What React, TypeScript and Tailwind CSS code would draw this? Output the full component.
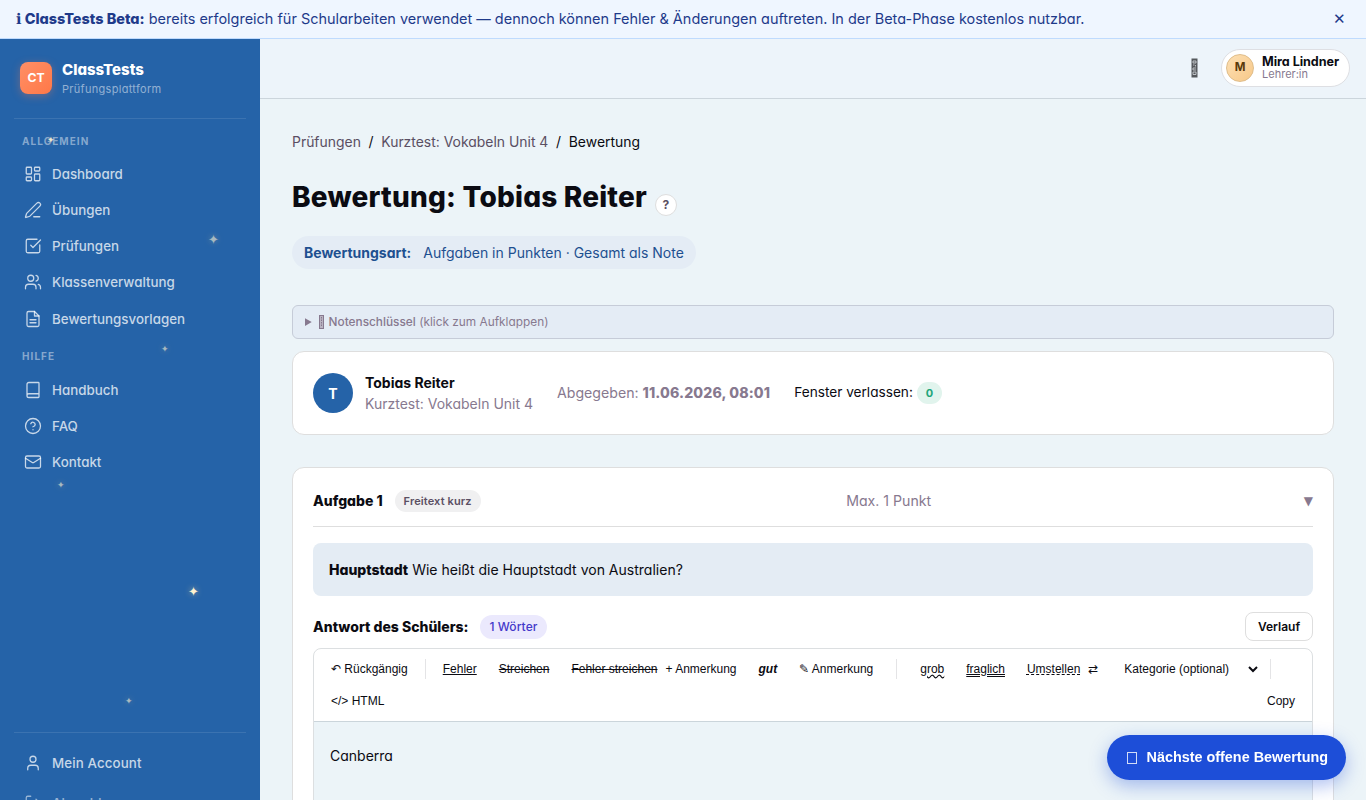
import {
  LayoutDashboard,
  PenLine,
  SquareCheckBig,
  Users,
  Book,
  CircleHelp,
  Mail,
  User,
  LogOut,
} from "lucide-react";
import type { ComponentType, ReactNode } from "react";

type IconProps = { size?: number; strokeWidth?: number; className?: string };
type IconType = ComponentType<IconProps>;

function FileLines({ size = 24, strokeWidth = 2, className }: IconProps) {
  return (
    <svg
      width={size}
      height={size}
      viewBox="0 0 24 24"
      fill="none"
      stroke="currentColor"
      strokeWidth={strokeWidth}
      strokeLinecap="round"
      strokeLinejoin="round"
      className={className}
    >
      <path d="M14 2H6a2 2 0 0 0-2 2v16a2 2 0 0 0 2 2h12a2 2 0 0 0 2-2V8z" />
      <path d="M14 2v6h6M16 13H8M16 17H8" />
    </svg>
  );
}

function NavItem({ icon: Icon, label }: { icon: IconType; label: string }) {
  return (
    <a className="flex h-[36.15px] items-center gap-2.5 px-2.5 text-[13.35px] font-medium text-white/75">
      <Icon size={18} strokeWidth={1.7} className="shrink-0" />
      <span>{label}</span>
    </a>
  );
}

function SectionLabel({ children }: { children: ReactNode }) {
  return (
    <div className="px-2 text-[10px] leading-4 font-bold tracking-[1.05px] text-white/45">{children}</div>
  );
}

const stars = [
  "left-[47px] top-[93px] text-[9px] opacity-90",
  "left-[208px] top-[192px] text-[13px] opacity-60",
  "left-[161px] top-[302px] text-[9px] opacity-60",
  "left-[57px] top-[438px] text-[9px] opacity-60",
  "left-[188px] top-[544px] text-[13px] opacity-100",
  "left-[125px] top-[654px] text-[9px] opacity-60",
];

function Sidebar() {
  return (
    <aside className="relative flex w-[260px] shrink-0 flex-col bg-[#2563a8] px-3.5">
      {stars.map((s) => (
        <span
          key={s}
          className={
            "absolute leading-4 text-[#fff3d0] [text-shadow:0_0_6px_rgba(255,220,150,0.6)] " + s
          }
        >
          ✦
        </span>
      ))}
      <div className="flex h-20 items-center gap-2.5 border-b border-white/10 px-1.5 pb-0.5">
        <div className="flex size-8 items-center justify-center rounded-lg bg-linear-to-br from-[#ff8f66] to-[#ff7847] pt-px text-[12.2px] font-bold text-white shadow-[0_2px_8px_rgba(255,122,77,0.35)]">
          CT
        </div>
        <div className="pt-1">
          <div className="text-[15px] leading-[18px] font-[790] text-white">ClassTests</div>
          <div className="mt-0.5 text-[11px] leading-[17px] tracking-[0.3px] text-white/50">Prüfungsplattform</div>
        </div>
      </div>
      <nav className="flex flex-col">
        <div className="pt-[14px] pb-[7px]">
          <SectionLabel>ALLGEMEIN</SectionLabel>
        </div>
        <NavItem icon={LayoutDashboard} label="Dashboard" />
        <NavItem icon={PenLine} label="Übungen" />
        <NavItem icon={SquareCheckBig} label="Prüfungen" />
        <NavItem icon={Users} label="Klassenverwaltung" />
        <NavItem icon={FileLines} label="Bewertungsvorlagen" />
        <div className="pt-[11.75px] pb-[7px]">
          <SectionLabel>HILFE</SectionLabel>
        </div>
        <NavItem icon={Book} label="Handbuch" />
        <NavItem icon={CircleHelp} label="FAQ" />
        <NavItem icon={Mail} label="Kontakt" />
      </nav>
      <div className="absolute inset-x-3.5 top-[693px] flex flex-col gap-1 border-t border-white/10 pt-[11.5px] tracking-[0.1px]">
        <NavItem icon={User} label="Mein Account" />
        <div className="opacity-70">
          <NavItem icon={LogOut} label="Abmelden" />
        </div>
      </div>
    </aside>
  );
}

function Header() {
  return (
    <header className="flex h-[60px] shrink-0 items-center justify-end border-b border-[#ccd5dc] bg-[#edf4fa] px-4 pb-0.5">
      <svg width="7" height="20" viewBox="0 0 7 20" className="mr-[23px]">
        <rect x="0.5" y="0.5" width="6" height="19" fill="#55585c" />
        <path
          d="M2 3h3v2H2zM2 7h1.5M4.5 7v1.5M2 10h3M2 10v2h3M2 14h3v2.5H2z"
          fill="none"
          stroke="#d3d8dc"
          strokeWidth="0.8"
        />
      </svg>
      <div className="flex h-[38px] items-center gap-2 rounded-full border border-[#dedfe3] bg-white pr-2.5 pl-1">
        <div className="flex size-7 items-center justify-center rounded-full border border-[#dfbd8a] bg-linear-to-br from-[#fde0b4] to-[#f7c888] text-[11.5px] font-bold text-[#5a3a0a]">
          M
        </div>
        <div className="pt-px">
          <div className="text-[12.6px] leading-[13px] font-bold tracking-[-0.06px] text-[#0b0b12]">Mira Lindner</div>
          <div className="text-[11px] leading-[13px] text-[#87798f]">Lehrer:in</div>
        </div>
      </div>
    </header>
  );
}

function ToolButton({ children }: { children: ReactNode }) {
  return (
    <button className="flex h-7 items-center border border-transparent px-2 font-['Liberation_Sans',sans-serif] text-[12px] whitespace-pre text-[#0b0b12]">
      {children}
    </button>
  );
}

function Separator() {
  return <span className="mx-1 h-5 w-px bg-[#e4e4e6]" />;
}

function Toolbar() {
  return (
    <div className="flex flex-wrap items-center gap-1 border-b border-[#cbd5db] px-2 py-1.5">
      <ToolButton>↶ Rückgängig</ToolButton>
      <Separator />
      <ToolButton>
        <span className="underline">Fehler</span>
      </ToolButton>
      <ToolButton>
        <span className="line-through">Streichen</span>
      </ToolButton>
      <ToolButton>
        <span className="line-through">Fehler streichen</span>
        <span className="ml-2">+ Anmerkung</span>
      </ToolButton>
      <ToolButton>
        <span className="font-bold italic">gut</span>
      </ToolButton>
      <ToolButton>✎ Anmerkung</ToolButton>
      <span className="ml-1.5 flex">
        <Separator />
      </span>
      <span className="ml-1.5 flex">
        <ToolButton>
          <span className="underline decoration-wavy">grob</span>
        </ToolButton>
      </span>
      <ToolButton>
        <span className="underline decoration-double">fraglich</span>
      </ToolButton>
      <ToolButton>
        <span className="underline decoration-dashed">Umstellen</span>
        <span className="ml-2">⇄</span>
      </ToolButton>
      <select className="h-7 w-[151px] border border-transparent bg-white px-2 font-['Liberation_Sans',sans-serif] text-[12px] text-[#0b0b12]">
        <option>Kategorie (optional)</option>
      </select>
      <Separator />
      <div className="flex w-full justify-between">
        <ToolButton>{"</> HTML"}</ToolButton>
        <ToolButton>Copy</ToolButton>
      </div>
    </div>
  );
}

function StudentCard() {
  return (
    <section className="mt-3 flex h-[84px] items-center gap-6 rounded-xl border border-[#dedede] bg-white px-5">
      <div className="flex items-center gap-3">
        <div className="flex size-10 items-center justify-center rounded-full bg-[#2563a8] text-[14px] font-bold text-white">
          T
        </div>
        <div className="text-[14px] leading-[21px]">
          <div className="font-[750]">Tobias Reiter</div>
          <div className="text-[#87798f]">Kurztest: Vokabeln Unit 4</div>
        </div>
      </div>
      <div className="text-[14.15px] text-[#87798f]">
        Abgegeben: <strong className="font-[780] tracking-[0.14px]">11.06.2026, 08:01</strong>
      </div>
      <div className="flex items-center gap-1 text-[13.65px]">
        <span className="pb-0.5">Fenster verlassen:</span>
        <span className="flex h-[22px] items-center rounded-full bg-[#e1f4ed] px-[9px] text-[11px] font-bold text-[#1ea67a]">
          0
        </span>
      </div>
    </section>
  );
}

function TaskCard() {
  return (
    <section className="mt-8 flex h-[500px] flex-col rounded-xl border border-[#dedede] bg-white px-5 pt-[22px]">
      <div className="flex h-[37px] items-start justify-between border-b border-[#dedede] text-[14px] leading-[22px]">
        <div className="flex items-center gap-3">
          <span className="font-[780]">Aufgabe 1</span>
          <span className="rounded-full bg-[#f0f0f1] px-[9px] text-[11px] leading-[22px] font-semibold tracking-[0.12px] text-[#5a4f63]">
            Freitext kurz
          </span>
        </div>
        <span className="mr-[7px] text-[14.15px] text-[#87798f]">Max. 1 Punkt</span>
        <span className="font-['DejaVu_Sans',sans-serif] text-[12px] text-[#87798f]">▼</span>
      </div>
      <div className="mt-4 flex h-[53px] items-center rounded-lg bg-[#e4ecf4] px-4 text-[14.03px] whitespace-pre">
        <strong className="font-[770]">Hauptstadt</strong> Wie heißt die Hauptstadt von Australien?
      </div>
      <div className="mt-4 flex h-[29px] items-center justify-between">
        <div className="flex items-center gap-3">
          <span className="text-[14px] font-[780]">Antwort des Schülers:</span>
          <span className="rounded-full bg-[#ebe9fd] px-[9px] text-[12px] leading-6 font-medium tracking-[0.08px] text-[#4338ca]">
            1 Wörter
          </span>
        </div>
        <button className="h-[29px] w-[68px] rounded-lg border border-[#dedede] bg-white text-[12px] font-semibold [font-feature-settings:normal]">
          Verlauf
        </button>
      </div>
      <div className="mt-[7px] flex grow flex-col overflow-hidden rounded-t-lg border border-[#dcdfe1] bg-white">
        <Toolbar />
        <div className="grow bg-[#ecf4f8] px-4 pt-[23px] text-[14px] leading-[21px]">Canberra</div>
      </div>
    </section>
  );
}

export default function App() {
  return (
    <div className="flex h-[800px] w-full flex-col overflow-hidden bg-[#ecf4f8] font-['Inter',sans-serif] text-[#0b0b12] [font-feature-settings:'cv11']">
      <div className="flex h-[39px] shrink-0 items-center justify-between border-b border-[#bfdbfe] bg-[#eff6ff] px-4 text-[14.46px] text-[#1e3a8a]">
        <div>
          <strong className="font-[790]">
            <span className="font-['DejaVu_Sans',sans-serif] text-[14.4px] font-bold">ℹ</span> ClassTests Beta:
          </strong>{" "}
          bereits erfolgreich für Schularbeiten verwendet — dennoch können Fehler &amp; Änderungen auftreten. In der
          Beta-Phase kostenlos nutzbar.
        </div>
        <button className="px-1 text-[15px]">✕</button>
      </div>
      <div className="flex min-h-0 grow">
        <Sidebar />
        <div className="flex min-w-0 grow flex-col">
          <Header />
          <main className="min-h-0 grow overflow-hidden px-8">
            <div className="mt-8 flex gap-[7.7px] text-[13.93px] leading-[22px]">
              <span className="text-[#5a4f63]">Prüfungen</span>
              <span>/</span>
              <span className="text-[#5a4f63]">Kurztest: Vokabeln Unit 4</span>
              <span>/</span>
              <span>Bewertung</span>
            </div>
            <div className="mt-6 flex h-10 items-center gap-2">
              <h1 className="text-[28px] font-extrabold tracking-[0.2px]">Bewertung: Tobias Reiter</h1>
              <span className="mt-4 flex size-[22px] items-center justify-center rounded-full border border-[#dedede] bg-white text-[12px] font-bold text-[#5a4f63]">
                ?
              </span>
            </div>
            <div className="mt-[19px] flex h-[33px] w-fit items-center gap-3 rounded-full bg-[#e4ecf5] px-3 text-[14px] text-[#1e5090]">
              <strong className="font-[750]">Bewertungsart:</strong>
              <span>Aufgaben in Punkten · Gesamt als Note</span>
            </div>
            <details className="mt-9 h-[34px] rounded-md border border-[#c6ccd8] bg-[#e4ecf5] px-3 text-[11.85px] leading-8 text-[#87798f]">
              <summary>
                <svg width="5" height="14" viewBox="0 0 5 14" className="mr-[5px] ml-px inline-block align-[-3px]">
                  <rect x="0.5" y="0.5" width="4" height="13" fill="#b9b3c1" stroke="#87798f" />
                  <path d="M2.5 2v10" stroke="#87798f" strokeDasharray="1.5 1" />
                </svg>
                <span className="font-medium">Notenschlüssel</span> (klick zum Aufklappen)
              </summary>
            </details>
            <StudentCard />
            <TaskCard />
          </main>
        </div>
      </div>
      <button className="fixed right-5 bottom-5 flex h-[45px] items-center rounded-full bg-[#1d4ed8] pr-[18px] pl-5 font-['Liberation_Sans',sans-serif] text-[14.4px] font-bold text-white shadow-[0_6px_18px_rgba(29,78,216,0.35)]">
        <span className="mr-[9.5px] h-3 w-2.5 border border-white/80" />
        <span>Nächste offene Bewertung</span>
      </button>
    </div>
  );
}
